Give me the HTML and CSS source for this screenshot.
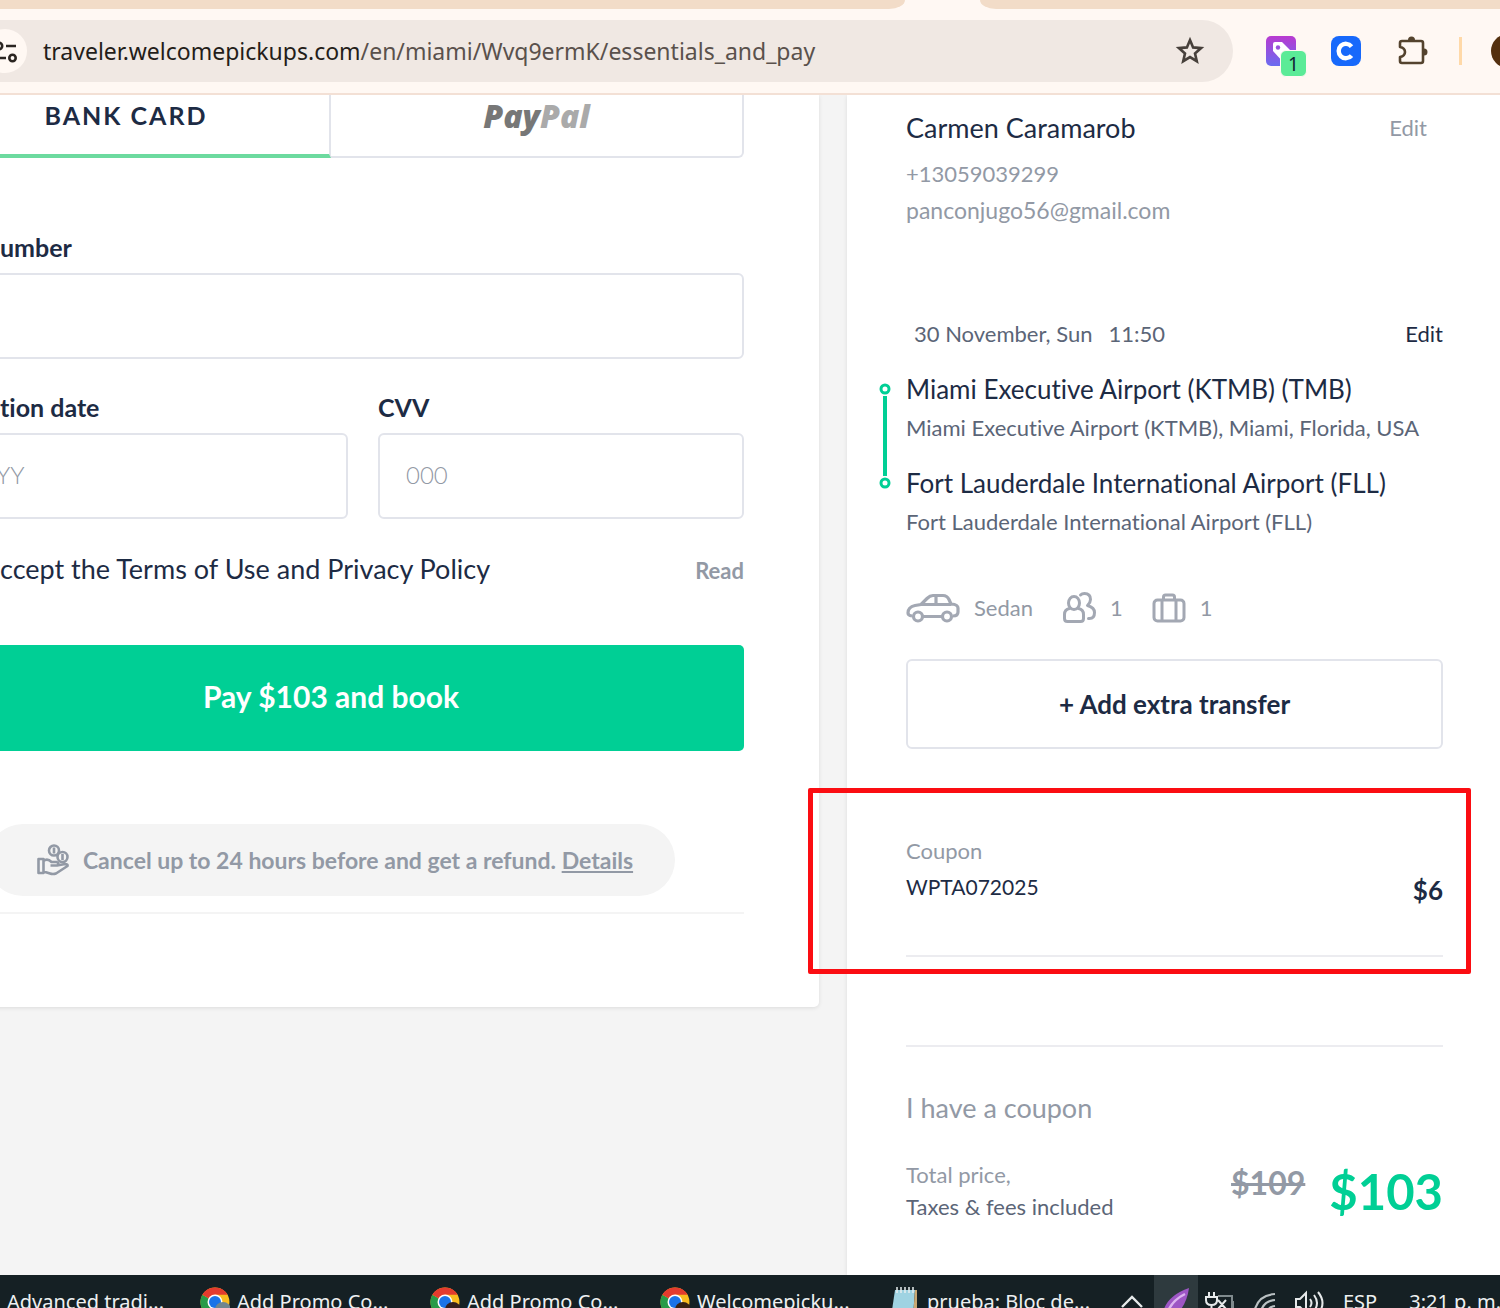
FILE: index.html
```html
<!DOCTYPE html>
<html lang="en">
<head>
  <meta charset="UTF-8">
  <meta name="viewport" content="width=device-width, initial-scale=1.0">
  <title>Essentials and pay</title>
  <link rel="stylesheet" href="styles.css">
</head>
<body>
  <header class="browser">
    <div class="tab-strip">
      <div class="tab-rest tab-rest-left"></div>
      <div class="tab-rest tab-rest-right"></div>
    </div>
    <div class="toolbar">
      <div class="address">
        <button class="site-info" type="button" aria-label="Site information">
          <svg width="44" height="44" viewBox="0 0 44 44" fill="none" stroke="#2b2521" stroke-width="2.600">
            <circle cx="16" cy="17" r="3.200"/><path d="M23 17h10M12 29h11"/><circle cx="29.500" cy="29" r="3.200"/>
          </svg>
        </button>
        <p class="url">traveler.welcomepickups.com<span>/en/miami/Wvq9ermK/essentials_and_pay</span></p>
        <button class="star" type="button" aria-label="Bookmark">
          <svg width="30" height="30" viewBox="0 0 30 30" fill="none" stroke="#47403b" stroke-width="2.600">
            <path d="M15 4l3.100 7.400 8 .7-6.100 5.300 1.800 7.800L15 21.100l-6.800 4.100L10 17.400 3.900 12.100l8-.7z"/>
          </svg>
        </button>
      </div>
      <div class="extensions">
        <button class="ext" type="button" aria-label="Tag extension">
          <svg width="30" height="30" viewBox="0 0 30 30">
            <defs><linearGradient id="tag" x1="0" y1="0" x2="0" y2="1"><stop offset="0" stop-color="#b93ad0"/><stop offset="1" stop-color="#6a6cf0"/></linearGradient></defs>
            <rect width="30" height="30" rx="5" fill="url(#tag)"/>
            <path d="M7 8q0-2 2-2h7l11 11-9 10L7 15z" fill="#fff"/><circle cx="12" cy="11.500" r="2.200" fill="#9a50dd"/>
          </svg>
          <span class="badge">1</span>
        </button>
        <button class="ext" type="button" aria-label="C extension">
          <svg width="30" height="30" viewBox="0 0 30 30">
            <rect width="30" height="30" rx="8" fill="#1769fb"/>
            <path d="M20.500 10.500a7.200 7.200 0 1 0 0 9" fill="none" stroke="#fff" stroke-width="4.400"/>
          </svg>
        </button>
        <button class="ext" type="button" aria-label="Extensions">
          <svg width="32" height="32" viewBox="0 0 32 32">
            <path d="M6 6h19q2 0 2 2v18q0 2-2 2H6q-2 0-2-2v-4q5-1 5-5t-5-5V8q0-2 2-2z" fill="none" stroke="#54432e" stroke-width="2.600" stroke-linejoin="round"/>
            <path d="M12 5a3.500 3.500 0 0 1 7 0zM28 13.500a3.500 3.500 0 0 1 0 7z" fill="#54432e"/>
          </svg>
        </button>
        <span class="divider"></span>
        <button class="avatar" type="button" aria-label="Profile"></button>
      </div>
    </div>
  </header>

  <main class="page">
    <form class="payment card">
      <div class="methods">
        <button class="method active" type="button">BANK CARD</button>
        <button class="method paypal" type="button" aria-label="PayPal"><span>Pay</span><span class="pal">Pal</span></button>
      </div>

      <div class="field">
        <label class="cut" for="number">umber</label>
        <input id="number" type="text">
      </div>
      <div class="field-row">
        <div class="field">
          <label class="cut" for="expiry">tion date</label>
          <input class="cut" id="expiry" type="text" placeholder="YY">
        </div>
        <div class="field">
          <label for="cvv">CVV</label>
          <input id="cvv" type="text" placeholder="000">
        </div>
      </div>

      <div class="terms">
        <p>ccept the Terms of Use and Privacy Policy</p>
        <a href="#">Read</a>
      </div>

      <button class="pay" type="submit">Pay $103 and book</button>

      <div class="refund-wrap">
        <p class="refund">
          <svg width="32" height="32" viewBox="0 0 32 32" fill="none" stroke="#9299a5" stroke-width="2.600" stroke-linejoin="round">
            <circle cx="17" cy="6.500" r="5"/><path d="M17 3.500v6"/>
            <circle cx="25.500" cy="13" r="5"/><path d="M25.500 10v6"/>
            <path d="M1.500 15h5v14h-5zM6.500 17q4-3 8 1h5q3 1 1 3.500h-7M20 21.500l8-1.500q3 0 2.500 2L19 29.500q-3 1-6 0l-6.500-2"/>
          </svg>
          <span>Cancel up to 24 hours before and get a refund. <a href="#">Details</a></span>
        </p>
      </div>
    </form>

    <aside class="summary card">
      <section class="contact">
        <div class="line">
          <h2>Carmen Caramarob</h2>
          <a class="muted" href="#">Edit</a>
        </div>
        <p>+13059039299</p>
        <p class="email">panconjugo56@gmail.com</p>
      </section>

      <section class="trip">
        <div class="line">
          <p class="date"><span>30 November, Sun</span><span>11:50</span></p>
          <a href="#">Edit</a>
        </div>
        <div class="route">
          <svg class="track" width="12" height="107" viewBox="0 0 12 107" fill="none" stroke="#00cf95" stroke-width="3">
            <circle cx="6" cy="6" r="4"/><path d="M6 13v80" stroke-width="4"/><circle cx="6" cy="100" r="4"/>
          </svg>
          <h3>Miami Executive Airport (KTMB) (TMB)</h3>
          <p>Miami Executive Airport (KTMB), Miami, Florida, USA</p>
          <h3>Fort Lauderdale International Airport (FLL)</h3>
          <p>Fort Lauderdale International Airport (FLL)</p>
        </div>
        <ul class="vehicle">
          <li>
            <svg width="54" height="32" viewBox="0 0 54 32" fill="none" stroke="#a3a8b3" stroke-width="3.200" stroke-linejoin="round">
              <path d="M6 24q-4-.5-4-3 0-6 7-7.500l6-1 6-6q3-3 6-3h10q4 0 6 4l2 4.500q7 .5 7 4V20q0 4-5 4M17 24.500h19M15 12.500h30M30 4v8"/>
              <circle cx="12" cy="24.500" r="4.500"/><circle cx="41" cy="24.500" r="4.500"/>
            </svg>
            Sedan
          </li>
          <li>
            <svg width="34" height="32" viewBox="0 0 34 32" fill="none" stroke="#a3a8b3" stroke-width="3" stroke-linejoin="round" stroke-linecap="round">
              <ellipse cx="12" cy="11" rx="5.500" ry="6.500"/>
              <path d="M7.500 16.500q-5 1-5 6v4q0 3 3 3h13q3 0 3-3v-4q0-5-5-6"/>
              <path d="M18.500 3q1.500-1.500 4-1.500 6 0 6 6 0 3-3 6 7 2 7 7 0 6-5 6h-1"/>
            </svg>
            1
          </li>
          <li>
            <svg width="34" height="32" viewBox="0 0 34 32" fill="none" stroke="#a3a8b3" stroke-width="3">
              <rect x="2" y="8" width="30" height="21" rx="3.500"/><path d="M10 8v21M24 8v21M11.500 8V5q0-2 2-2h7q2 0 2 2v3"/>
            </svg>
            1
          </li>
        </ul>
        <button class="add" type="button">+ Add extra transfer</button>
      </section>

      <section class="coupon">
        <div>
          <p class="muted">Coupon</p>
          <p class="code">WPTA072025</p>
        </div>
        <strong>$6</strong>
      </section>

      <section class="total">
        <a class="have-coupon" href="#">I have a coupon</a>
        <div class="price">
          <div class="price-label">
            <p class="muted">Total price,</p>
            <p>Taxes &amp; fees included</p>
          </div>
          <s>$109</s>
          <strong>$103</strong>
        </div>
      </section>
    </aside>
  </main>

  <svg class="sprites" aria-hidden="true">
    <symbol id="chrome" viewBox="0 0 30 30">
      <circle cx="15" cy="15" r="14.500" fill="#fbbc1f"/>
      <path d="M15 15L2.400 7.700A14.500 14.500 0 0 0 15 29.500z" fill="#279b48"/>
      <path d="M15 15L2.400 7.700A14.500 14.500 0 0 1 27.600 7.700H15z" fill="#e33b2e"/>
      <circle cx="15" cy="15" r="7.500" fill="#fff"/><circle cx="15" cy="15" r="6" fill="#1a73e8"/>
    </symbol>
  </svg>
  <footer class="taskbar">
    <button class="task task-first" type="button">Advanced tradi...</button>
    <button class="task" type="button">
      <svg width="30" height="30"><use href="#chrome"/><circle cx="23" cy="23" r="8" fill="#71868f"/></svg>
      Add Promo Co...
    </button>
    <button class="task" type="button">
      <svg width="30" height="30"><use href="#chrome"/><circle cx="23" cy="23" r="8" fill="#35201f"/></svg>
      Add Promo Co...
    </button>
    <button class="task" type="button">
      <svg width="30" height="30"><use href="#chrome"/><circle cx="23" cy="23" r="8" fill="#3a2414"/></svg>
      Welcomepicku...
    </button>
    <button class="task" type="button">
      <svg width="30" height="30" viewBox="0 0 30 30">
        <path d="M5 3h20l-2 27H1z" fill="#9fd3e2"/><path d="M25 3h2v27h-4z" fill="#c9a873"/>
        <path d="M7 0v6M11 0v6M15 0v6M19 0v6M23 0v6" stroke="#e8eef0" stroke-width="1.500"/>
      </svg>
      prueba: Bloc de...
    </button>
    <div class="tray">
      <svg width="24" height="30" viewBox="0 0 24 30" fill="none" stroke="#e6e9ea" stroke-width="2.400"><path d="M2 20L12 10l10 10"/></svg>
      <span class="tray-active">
        <svg width="30" height="30" viewBox="0 0 30 30"><path d="M28 1Q8 8 3 22v8h8Q25 22 28 1z" fill="#9d56c4"/><path d="M24 7Q10 14 6 27" fill="none" stroke="#dcb4ef" stroke-width="2.500"/></svg>
      </span>
      <svg width="30" height="30" viewBox="0 0 30 30" fill="none" stroke="#e6e9ea" stroke-width="2"><path d="M4 5v5M9 5v5M1 10h11v3q0 5-5.500 5T1 13zM6.500 18v9M13 13l8 9M21 13l-8 9"/><path d="M13 9h14v18M28 14v8" stroke="#7f8a8d"/></svg>
      <svg width="24" height="30" viewBox="0 0 24 30" fill="none" stroke="#b9c0c2" stroke-width="2.200"><path d="M2 22Q6 8 22 7M8 24q3-10 14-11M14 26q1-6 8-7"/></svg>
      <svg width="30" height="30" viewBox="0 0 30 30" fill="none" stroke="#e6e9ea" stroke-width="2"><path d="M1 12h4l6-6v20l-6-6H1zM15 12q3 4 0 8M19 8q6 8 0 16M23 5q9 11 0 22"/></svg>
      <span class="lang">ESP</span>
      <time>3:21 p. m.</time>
    </div>
  </footer>
</body>
</html>
```
FILE: styles.css
```css
:root {
    --ink: #1d2b44;
    --slate: #5b6577;
    --muted: #9299a5;
    --green: #00cf95;
    --line: #e2e4eb;
    /* how far the payment column is scrolled past the left edge */
    --cut: 82px;
}
* {
    box-sizing: border-box;
}
body {
    display: flex;
    flex-direction: column;
    height: 100vh;
    margin: 0;
    overflow: hidden;
    background: #f4f4f4;
    color: var(--ink);
    font-family: Lato, "Liberation Sans", sans-serif;
    font-size: 22px;
    font-variant-ligatures: none;
    line-height: 30px;
}
h2, h3, p, ul {
    margin: 0;
    padding: 0;
    font-weight: 400;
}
h2 {
    font-size: 27px;
}
h3 {
    font-size: 26px;
}
p {
    font-size: 22px;
}
button {
    padding: 0;
    border: none;
    background: none;
    color: inherit;
    font-family: inherit;
    cursor: pointer;
}
a {
    color: inherit;
    text-decoration: none;
}
svg {
    display: block;
    flex-shrink: 0;
}
.muted {
    color: var(--muted);
}
.sprites {
    position: absolute;
    width: 0;
    height: 0;
}

/* browser bar */
.browser {
    flex-shrink: 0;
    background: #fff8f3;
    border-bottom: 2px solid #f3e0d5;
}
.tab-strip {
    display: flex;
    justify-content: space-between;
    height: 9px;
}
.tab-rest {
    background: #f2dcc8;
}
.tab-rest-left {
    width: 905px;
    border-bottom-right-radius: 16px 9px;
}
.tab-rest-right {
    width: 520px;
    border-bottom-left-radius: 16px 9px;
}
.toolbar {
    display: flex;
    align-items: center;
    height: 84px;
}
.address {
    display: flex;
    align-items: center;
    flex: 1;
    height: 62px;
    padding-right: 28px;
    border-radius: 0 31px 31px 0;
    background: #f0e8e3;
}
.site-info {
    width: 44px;
    height: 44px;
    margin-left: -17px;
    border-radius: 50%;
    background: #fff8f3;
}
.url {
    flex: 1;
    margin-left: 16px;
    color: #241d19;
    font-family: "Noto Sans", sans-serif;
    font-size: 23px;
}
.url span {
    color: #5a514c;
}
.extensions {
    display: flex;
    align-items: center;
    width: 267px;
    padding-left: 33px;
    gap: 35px;
}
.ext {
    position: relative;
}
.badge {
    position: absolute;
    top: 14px;
    left: 14px;
    width: 27px;
    height: 27px;
    border: 1px solid #fff8f3;
    border-radius: 6px;
    background: #5beb97;
    color: #123;
    font: 19px/27px "Noto Sans", sans-serif;
}
.divider {
    flex-shrink: 0;
    width: 3px;
    height: 28px;
    margin-left: -4px;
    background: #ffd9a8;
}
.avatar {
    flex-shrink: 0;
    width: 34px;
    height: 34px;
    margin-left: -6px;
    border-radius: 50%;
    background: #54300f;
}

/* page */
.page {
    display: flex;
    align-items: flex-start;
    gap: 28px;
    flex: 1;
    min-height: 0;
    overflow: hidden;
}
.card {
    background: #fff;
    box-shadow: 0 1px 4px rgba(0, 0, 0, 0.1);
}
.payment {
    flex: 1;
    margin-left: calc(0px - var(--cut));
    padding: 0 75px 93px 0;
    border-radius: 0 0 5px 5px;
}
.methods {
    display: grid;
    grid-template: 63px / 1fr 1fr;
    margin-bottom: 74px;
}
.method {
    padding-bottom: 20px;
    border: 2px solid var(--line);
    border-width: 0 2px 2px 0;
    border-radius: 0 0 6px 0;
    font-size: 25px;
    font-weight: 700;
}
.method.active {
    padding-left: var(--cut);
    padding-right: 77px;
    border-bottom: 4px solid #6cda9f;
    border-radius: 0;
    letter-spacing: 2px;
}
.paypal {
    color: #777;
    font-family: "Open Sans", sans-serif;
    font-size: 32px;
    font-style: italic;
    font-weight: 800;
    line-height: 30px;
}
.pal {
    color: #aaa;
}
.field label {
    display: block;
    margin-bottom: 11px;
    font-size: 25px;
    font-weight: 700;
}
label.cut {
    padding-left: var(--cut);
}
.field input {
    display: block;
    width: 100%;
    height: 86px;
    padding: 0 26px 4px;
    border: 2px solid var(--line);
    border-radius: 6px;
    color: var(--ink);
    font-family: inherit;
    font-size: 24px;
}
.field input.cut {
    padding-left: 76px;
}
.field input::placeholder {
    color: var(--muted);
    opacity: 1;
    font-weight: 300;
}
.field-row {
    display: grid;
    grid-template-columns: 430fr 366fr;
    gap: 30px;
    margin-top: 33px;
}
.terms {
    display: flex;
    justify-content: space-between;
    align-items: flex-start;
    margin: 35px 0 59px;
    padding-left: var(--cut);
}
.terms p {
    font-size: 27px;
}
.terms a {
    padding-top: 2px;
    color: var(--muted);
    font-weight: 700;
}
.pay {
    display: block;
    width: 100%;
    height: 106px;
    padding-bottom: 4px;
    border-radius: 5px;
    background: var(--green);
    color: #fff;
    font-size: 30px;
    font-weight: 700;
}
.refund-wrap {
    display: flex;
    justify-content: center;
    margin-top: 73px;
    padding-bottom: 16px;
    border-bottom: 2px solid #f4f4f4;
}
.refund {
    display: flex;
    align-items: center;
    gap: 14px;
    height: 72px;
    padding: 0 42px 0 50px;
    border-radius: 36px;
    background: #f4f4f4;
    color: var(--muted);
    font-size: 23px;
    font-weight: 700;
}
.refund a {
    text-decoration: underline;
}

/* booking summary */
.summary {
    width: 653px;
    align-self: stretch;
    padding: 18px 57px 0 59px;
}
.line {
    display: flex;
    justify-content: space-between;
}
.contact .line {
    margin-bottom: 12px;
    padding-right: 16px;
}
.contact p {
    color: var(--muted);
    line-height: 37px;
}
.contact .email {
    font-size: 23px;
}
.trip .line {
    margin-top: 90px;
    color: var(--slate);
}
.trip .line a {
    color: var(--ink);
}
.date {
    display: flex;
    gap: 16px;
    padding-left: 8px;
}
.route {
    position: relative;
    padding-top: 25px;
}
.track {
    position: absolute;
    top: 34px;
    left: -27px;
}
.route p {
    margin: 9px 0 25px;
    color: var(--slate);
}
.vehicle {
    display: flex;
    gap: 29px;
    margin: 55px 0 35px;
    color: var(--muted);
    list-style: none;
}
.vehicle li {
    display: flex;
    align-items: center;
    gap: 14px;
}
.add {
    width: 100%;
    height: 90px;
    border: 2px solid var(--line);
    border-radius: 6px;
    font-size: 26px;
    font-weight: 700;
}
.coupon {
    position: relative;
    display: flex;
    justify-content: space-between;
    align-items: flex-end;
    margin-top: 84px;
    padding-bottom: 50px;
    border-bottom: 2px solid #ececf0;
    line-height: 36px;
}
.coupon .code {
    font-size: 21px;
}
.coupon strong {
    font-size: 26px;
    line-height: 30px;
}
/* red highlight frame round the coupon row */
.coupon::after {
    content: "";
    position: absolute;
    inset: -45px -28px -19px -98px;
    border: 5px solid #fb0d12;
    border-radius: 2px;
}
.total {
    margin-top: 88px;
    padding-top: 46px;
    border-top: 2px solid #ececf0;
}
.have-coupon {
    color: var(--muted);
    font-size: 27px;
}
.price {
    display: flex;
    align-items: center;
    gap: 24px;
    margin-top: 34px;
    line-height: 32px;
}
.price-label {
    flex: 1;
    color: var(--slate);
}
.price s {
    padding-bottom: 16px;
    color: var(--muted);
    font-size: 32px;
    font-weight: 700;
}
.price strong {
    color: var(--green);
    font-size: 49px;
}

/* taskbar */
.taskbar {
    display: flex;
    flex-shrink: 0;
    align-items: flex-start;
    height: 33px;
    padding-left: 7px;
    overflow: hidden;
    background: #152024;
    color: #eef1f2;
    font-family: "Noto Sans", sans-serif;
}
.task {
    display: flex;
    flex-shrink: 0;
    gap: 7px;
    width: 230px;
    padding-top: 12px;
    font-size: 20px;
    line-height: 30px;
    white-space: nowrap;
}
.task-first {
    width: 193px;
}
.tray {
    display: flex;
    flex-shrink: 0;
    gap: 18px;
    padding-top: 12px;
    font-size: 20px;
    white-space: nowrap;
}
.tray-active {
    margin: -12px -11px 0 -8px;
    padding: 12px 7px 0;
    background: #2e3a3e;
}
.tray time {
    margin-left: 14px;
}
```
